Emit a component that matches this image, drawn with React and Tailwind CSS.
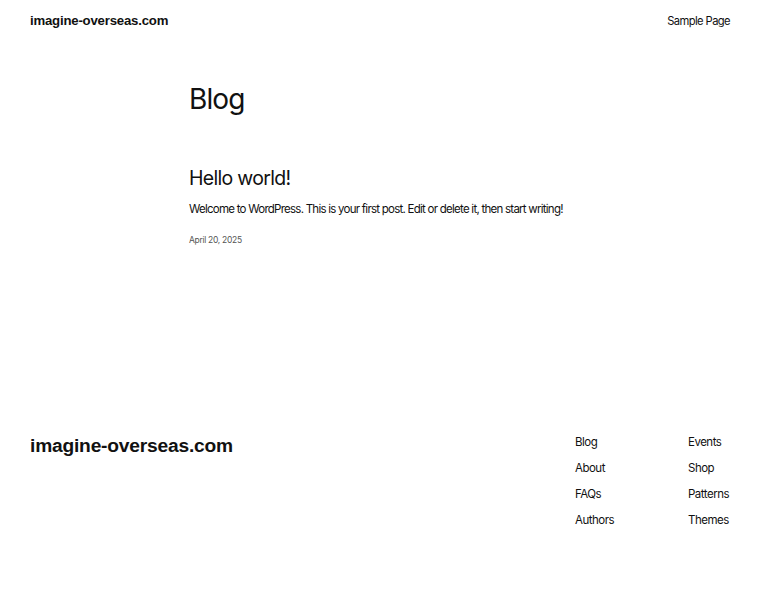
const footerLinks = [
  ["Blog", "About", "FAQs", "Authors"],
  ["Events", "Shop", "Patterns", "Themes"],
];

export default function App() {
  return (
    <div className="min-h-[600px] bg-white text-[#111] font-['Inter',sans-serif]">
      <header className="flex items-center justify-between px-[30px] pt-[6px] h-[36px]">
        <a className="font-['Liberation_Sans',Arial,sans-serif] font-bold text-[13.2px] tracking-[-0.2px]">
          imagine-overseas.com
        </a>
        <nav className="text-[11.2px] tracking-[-0.6px]">Sample Page</nav>
      </header>

      <main className="mx-auto w-[382px] pb-[177px]">
        <h1 className="mt-[49px] text-[28px] leading-none tracking-[-0.9px]">Blog</h1>
        <article className="mt-[56px]">
          <h2 className="text-[19.5px] leading-none tracking-[-0.7px]">Hello world!</h2>
          <p className="mt-[12px] text-[11.5px] tracking-[-0.75px] whitespace-nowrap">
            Welcome to WordPress. This is your first post. Edit or delete it, then start writing!
          </p>
          <div className="mt-[16px] text-[8.5px] text-[#555] tracking-[-0.3px]">April 20, 2025</div>
        </article>
      </main>

      <footer className="flex justify-between px-[30px] pt-[12px]">
        <div className="font-['Liberation_Sans',Arial,sans-serif] font-bold text-[19.2px] tracking-[-0.2px] leading-none">
          imagine-overseas.com
        </div>
        <div className="flex mr-[1px] mt-[1px]">
          {footerLinks.map((col, i) => (
            <ul key={i} className={i === 0 ? "w-[113px]" : "w-[41px]"}>
              {col.map((l) => (
                <li key={l} className="h-[26px] text-[11.5px] tracking-[-0.5px] leading-none">
                  {l}
                </li>
              ))}
            </ul>
          ))}
        </div>
      </footer>
    </div>
  );
}
